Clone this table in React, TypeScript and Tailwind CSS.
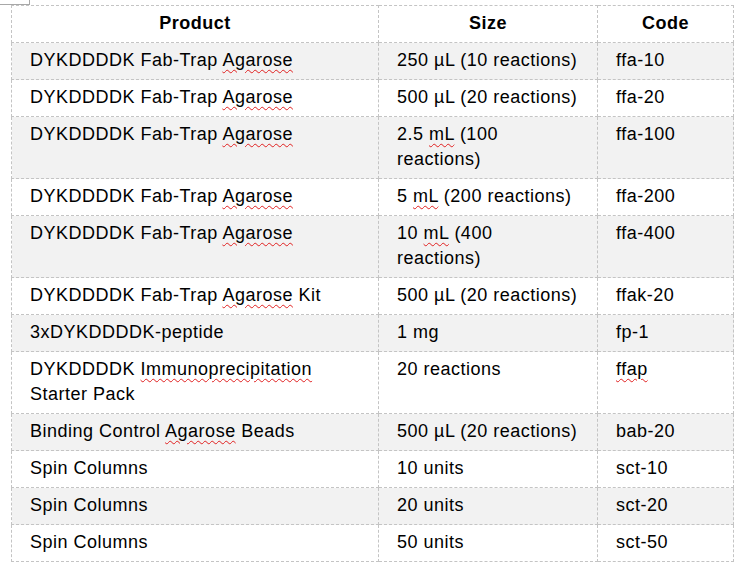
import React from 'react';

type Row = { product: React.ReactNode; size: React.ReactNode; code: React.ReactNode };

// spell-check squiggle, like the word processor shows
function Sq({ children }: { children: React.ReactNode }) {
    return (
        <span className="underline decoration-wavy decoration-[#e02020] decoration-1 underline-offset-[3px]">
            {children}
        </span>
    );
}

const agarose = (
    <>
        DYKDDDDK Fab-Trap <Sq>Agarose</Sq>
    </>
);

const rows: Row[] = [
    { product: agarose, size: '250 µL (10 reactions)', code: 'ffa-10' },
    { product: agarose, size: '500 µL (20 reactions)', code: 'ffa-20' },
    { product: agarose, size: <>2.5 <Sq>mL</Sq> (100<br />reactions)</>, code: 'ffa-100' },
    { product: agarose, size: <>5 <Sq>mL</Sq> (200 reactions)</>, code: 'ffa-200' },
    { product: agarose, size: <>10 <Sq>mL</Sq> (400<br />reactions)</>, code: 'ffa-400' },
    { product: <>DYKDDDDK Fab-Trap <Sq>Agarose</Sq> Kit</>, size: '500 µL (20 reactions)', code: 'ffak-20' },
    { product: '3xDYKDDDDK-peptide', size: '1 mg', code: 'fp-1' },
    { product: <>DYKDDDDK <Sq>Immunoprecipitation</Sq><br />Starter Pack</>, size: '20 reactions', code: <Sq>ffap</Sq> },
    { product: <>Binding Control <Sq>Agarose</Sq> Beads</>, size: '500 µL (20 reactions)', code: 'bab-20' },
    { product: 'Spin Columns', size: '10 units', code: 'sct-10' },
    { product: 'Spin Columns', size: '20 units', code: 'sct-20' },
    { product: 'Spin Columns', size: '50 units', code: 'sct-50' },
];

export default function App() {
    const cell = 'border border-dashed border-[#c4c4c4] px-[18px] pt-[5px] pb-[6px] align-top whitespace-nowrap';
    const head = 'border border-dashed border-[#c4c4c4] pt-[5px] pb-[6px] text-center font-bold';

    return (
        <div className="relative w-[743px] h-[571px] bg-white text-black text-[18px] leading-[25px] tracking-[0.5px] font-['Liberation_Sans',Arial,sans-serif]">
            {/* page margin marker */}
            <div className="absolute left-0 top-0 w-[30px] h-[5px] border-r border-b border-[#a8a8a8]" />

            <div className="pt-[5px] pl-[11px]">
                <table className="table-fixed border-collapse w-[722px]">
                    <colgroup>
                        <col className="w-[367px]" />
                        <col className="w-[219px]" />
                        <col className="w-[136px]" />
                    </colgroup>
                    <thead>
                        <tr>
                            <th className={head}>Product</th>
                            <th className={head}>Size</th>
                            <th className={head}>Code</th>
                        </tr>
                    </thead>
                    <tbody>
                        {rows.map((r, i) => (
                            <tr key={i} className={i % 2 === 0 ? 'bg-[#f2f2f2]' : 'bg-white'}>
                                <td className={cell}>{r.product}</td>
                                <td className={cell}>{r.size}</td>
                                <td className={cell}>{r.code}</td>
                            </tr>
                        ))}
                    </tbody>
                </table>
            </div>
        </div>
    );
}
